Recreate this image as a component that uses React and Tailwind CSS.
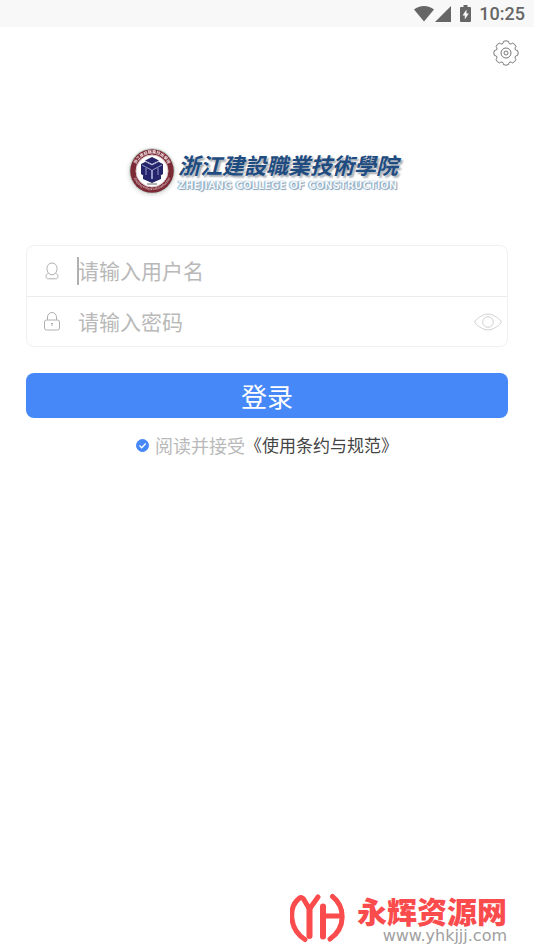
import { useState } from "react";

const GEAR_TEETH = 8;

// Rounded cog outline, alternating between tooth and valley radius
function gearPath() {
  const point = (r, deg) => {
    const a = (deg * Math.PI) / 180;
    return `${(13 + r * Math.cos(a)).toFixed(2)} ${(13 + r * Math.sin(a)).toFixed(2)}`;
  };
  const step = 360 / GEAR_TEETH;
  let d = `M${point(11.8, -13)}`;
  for (let i = 0; i < GEAR_TEETH; i++) {
    const c = i * step;
    d += ` Q${point(13, c)} ${point(11.8, c + 13)}`;
    d += ` L${point(10.6, c + 15)}`;
    d += ` Q${point(9, c + step / 2)} ${point(10.6, c + step - 15)}`;
    d += ` L${point(11.8, c + step - 13)}`;
  }
  return d + "Z";
}

function GearIcon() {
  return (
    <svg className="size-[26px]" viewBox="0 0 26 26" fill="none" stroke="#777" strokeLinejoin="round">
      <path d={gearPath()} />
      <circle cx="13" cy="13" r="5" />
      <circle cx="13" cy="13" r="2" />
    </svg>
  );
}

function UserIcon() {
  return (
    <svg className="h-[18px] w-4" viewBox="0 0 16 18" fill="none" stroke="#b0b0b0">
      <path d="M8 1C4.900 1 3 3.300 3 6.600c0 3.300 2 6.200 5 6.200s5-2.900 5-6.200C13 3.300 11.100 1 8 1Z" />
      <path d="M4.500 11.300C2.900 11.800 2 12.800 2 14.300c0 1.600 1 2.500 2.600 2.500h6.800c1.600 0 2.600-.9 2.600-2.500 0-1.500-.9-2.500-2.500-3" />
    </svg>
  );
}

function LockIcon() {
  return (
    <svg className="h-[19px] w-4" viewBox="0 0 16 19" fill="none" stroke="#b0b0b0">
      <rect x=".5" y="8" width="15" height="10" rx="2" />
      <path d="M3.500 8V5a4.500 4.500 0 0 1 9 0v3" />
      <path d="M7 11.500h2M8 11v3" />
    </svg>
  );
}

function EyeIcon() {
  return (
    <svg className="h-[18px] w-7" viewBox="0 0 28 18" fill="none" stroke="#d2d2d2">
      <path d="M.6 9C1.500 6.500 8.500 1 14 1s12.500 5.500 13.400 8C26.500 11.500 19.500 17 14 17S1.500 11.500.6 9Z" />
      <circle cx="14" cy="9" r="5.300" />
    </svg>
  );
}

function StatusBar() {
  return (
    <div className="flex h-[27px] items-center justify-end bg-[#f8f8f8] pr-[9px] text-[#666]">
      <svg className="h-4 w-5" viewBox="0 0 20 16" fill="currentColor">
        <path d="M0 3.600C2.800 1.300 6.300 0 10 0s7.200 1.300 10 3.600L10 15.500Z" />
      </svg>
      <svg className="ml-px h-4 w-4" viewBox="0 0 16 16" fill="currentColor">
        <path d="M16 0v16H0Z" />
      </svg>
      <svg className="ml-[9px] h-[17px] w-[11px]" viewBox="0 0 11 17">
        <path d="M3.500 0h4v2H10a1 1 0 0 1 1 1v13a1 1 0 0 1-1 1H1a1 1 0 0 1-1-1V3a1 1 0 0 1 1-1h2.500Z" fill="currentColor" />
        <path d="M6.500 4.500 2.500 10.500h2.300V14.500l4-6H6.500Z" fill="#f8f8f8" />
      </svg>
      <span className="ml-2 font-[Roboto,sans-serif] text-lg font-medium">10:25</span>
    </div>
  );
}

function Seal() {
  return (
    <svg className="size-12 shrink-0 drop-shadow-sm" viewBox="0 0 48 48">
      <defs>
        <path id="seal-top" d="M7 27A17.300 17.300 0 1 1 41 27" />
        <path id="seal-bottom" d="M4.200 25A19.900 19.900 0 0 0 43.800 25" />
      </defs>
      <circle cx="24" cy="24" r="23" fill="#c9d8cf" />
      <circle cx="24" cy="24" r="21.800" fill="#7c2b36" />
      <circle cx="24" cy="24" r="16" fill="#fff" stroke="#d9c9cc" />
      <text fill="#f6e9eb" fontSize="4" fontWeight="700">
        <textPath href="#seal-top" startOffset="50%" textAnchor="middle">浙江建設職業技術學院</textPath>
      </text>
      <text fill="#f1e4e6" fontSize="3">
        <textPath href="#seal-bottom" startOffset="50%" textAnchor="middle">Zhejiang College of Construction</textPath>
      </text>
      <g fill="#25246b">
        <path d="m24 10 7 3.500-7 3.500-7-3.500Z" />
        <path d="m13 17 5-2.500 6 3.500 6-3.500 5 2.500v10l-11 7-11-7Z" />
        <path d="M15 28v4l9 4 9-4v-4l-9 5Z" />
      </g>
      <path d="m14 18 9.500 5v9M34 18l-9.500 5v9M18 15l6 3 6-3M18 21v7M30 21v7" fill="none" stroke="#aeb8e2" strokeWidth=".8" />
      <path d="M19 37h10" stroke="#666" />
    </svg>
  );
}

function Brand() {
  return (
    <div className="flex items-center justify-center pr-2">
      <Seal />
      <div className="ml-0.5 flex flex-col pb-0.5 whitespace-nowrap">
        <span className="text-[22px] leading-8 font-bold text-[#1f4c80] italic [text-shadow:2px_2px_2px_#a0a6ae]">
          浙江建設職業技術學院
        </span>
        <span className="font-['DejaVu_Sans',sans-serif] text-[10px] leading-3 font-bold text-[#f4f8fb] [text-shadow:0_0_1px_#6189aa,1px_1px_1px_#8ba6bd,-1px_0_1px_#a3bbce]">
          ZHEJIANG COLLEGE OF CONSTRUCTION
        </span>
      </div>
    </div>
  );
}

function Watermark() {
  return (
    <footer className="mt-auto flex items-center gap-3 self-end pr-[27px]">
      <svg className="mb-1.5 h-[50px] w-[55px]" viewBox="0 0 55 50" fill="none" stroke="#fa4b4d" strokeWidth="5" strokeLinejoin="round" strokeLinecap="round">
        <path d="M15 46.500C-1.500 36-1.500 14 9 5.500c2-1.500 3.500-1 4.500.5L19.500 16 28 4" />
        <path d="M19.500 16v27" strokeWidth="6" />
        <path d="M33 13.500V43.500" strokeWidth="6" />
        <path d="M33 23h18" />
        <path d="M42.500 3.500C55.500 14 56 35 40 46" />
      </svg>
      <div className="flex flex-col pb-1.5">
        <span className="text-[30px] leading-9 font-black text-[#fa4b4d]">永辉资源网</span>
        <span className="self-end font-['DejaVu_Sans',sans-serif] text-base leading-4 text-[#a0a0a0]">www.yhkjjj.com</span>
      </div>
    </footer>
  );
}

export default function App() {
  const [form, setForm] = useState({ username: "", password: "" });
  const [showPassword, setShowPassword] = useState(false);
  const [accepted, setAccepted] = useState(true);

  const handleChange = (e) => {
    setForm({ ...form, [e.target.name]: e.target.value });
  };

  return (
    <div className="flex min-h-screen flex-col bg-white font-['Noto_Sans_CJK_SC',sans-serif]">
      <StatusBar />

      <header className="flex justify-end pt-[13px] pr-[15px]">
        <button type="button" aria-label="设置">
          <GearIcon />
        </button>
      </header>

      <main className="px-[26px] pt-[81px]">
        <Brand />

        <form className="mt-[50px]" onSubmit={(e) => e.preventDefault()}>
          <div className="divide-y divide-[#ececec] rounded-lg border border-[#f0f0f0]">
            <div className="flex h-[51px] items-center pl-[17px]">
              <label htmlFor="username" aria-label="用户名">
                <UserIcon />
              </label>
              <span className="ml-[17px] h-7 w-0.5 bg-[#b0b0b0]" />
              <input
                id="username"
                name="username"
                className="-ml-px min-w-0 flex-1 text-[21px] text-[#555] outline-none placeholder:text-[#b9b9b9]"
                placeholder="请输入用户名"
                value={form.username}
                onChange={handleChange}
              />
            </div>
            <div className="flex h-[49px] items-center pr-[5px] pl-[17px]">
              <label htmlFor="password" aria-label="密码">
                <LockIcon />
              </label>
              <input
                id="password"
                name="password"
                type={showPassword ? "text" : "password"}
                className="ml-[18px] min-w-0 flex-1 text-[21px] text-[#555] outline-none placeholder:text-[#b9b9b9]"
                placeholder="请输入密码"
                value={form.password}
                onChange={handleChange}
              />
              <button type="button" aria-label="显示密码" onClick={() => setShowPassword(!showPassword)}>
                <EyeIcon />
              </button>
            </div>
          </div>

          <button type="submit" className="mt-[26px] h-[45px] w-full rounded-lg bg-[#4688f7] text-[26px] leading-[42px] text-white">
            登录
          </button>

          {/* Terms */}
          <div className="mt-[13px] flex items-center justify-center text-lg">
            <label className="flex items-center text-[#b9b9b9]">
              <span className="mr-1.5 grid size-[13px]">
                <input
                  type="checkbox"
                  className="col-start-1 row-start-1 size-[13px] appearance-none rounded-full border border-[#4688f7] checked:bg-[#4688f7]"
                  checked={accepted}
                  onChange={(e) => setAccepted(e.target.checked)}
                />
                {accepted && (
                  <svg className="pointer-events-none col-start-1 row-start-1 size-[13px]" viewBox="0 0 13 13" fill="none" stroke="#fff" strokeWidth="1.300">
                    <path d="m3.500 6.500 2.200 2.200 4-4.200" />
                  </svg>
                )}
              </span>
              阅读并接受
            </label>
            <a href="#terms" className="text-[17px] text-[#444]">
              《使用条约与规范》
            </a>
          </div>
        </form>
      </main>

      <Watermark />
    </div>
  );
}
